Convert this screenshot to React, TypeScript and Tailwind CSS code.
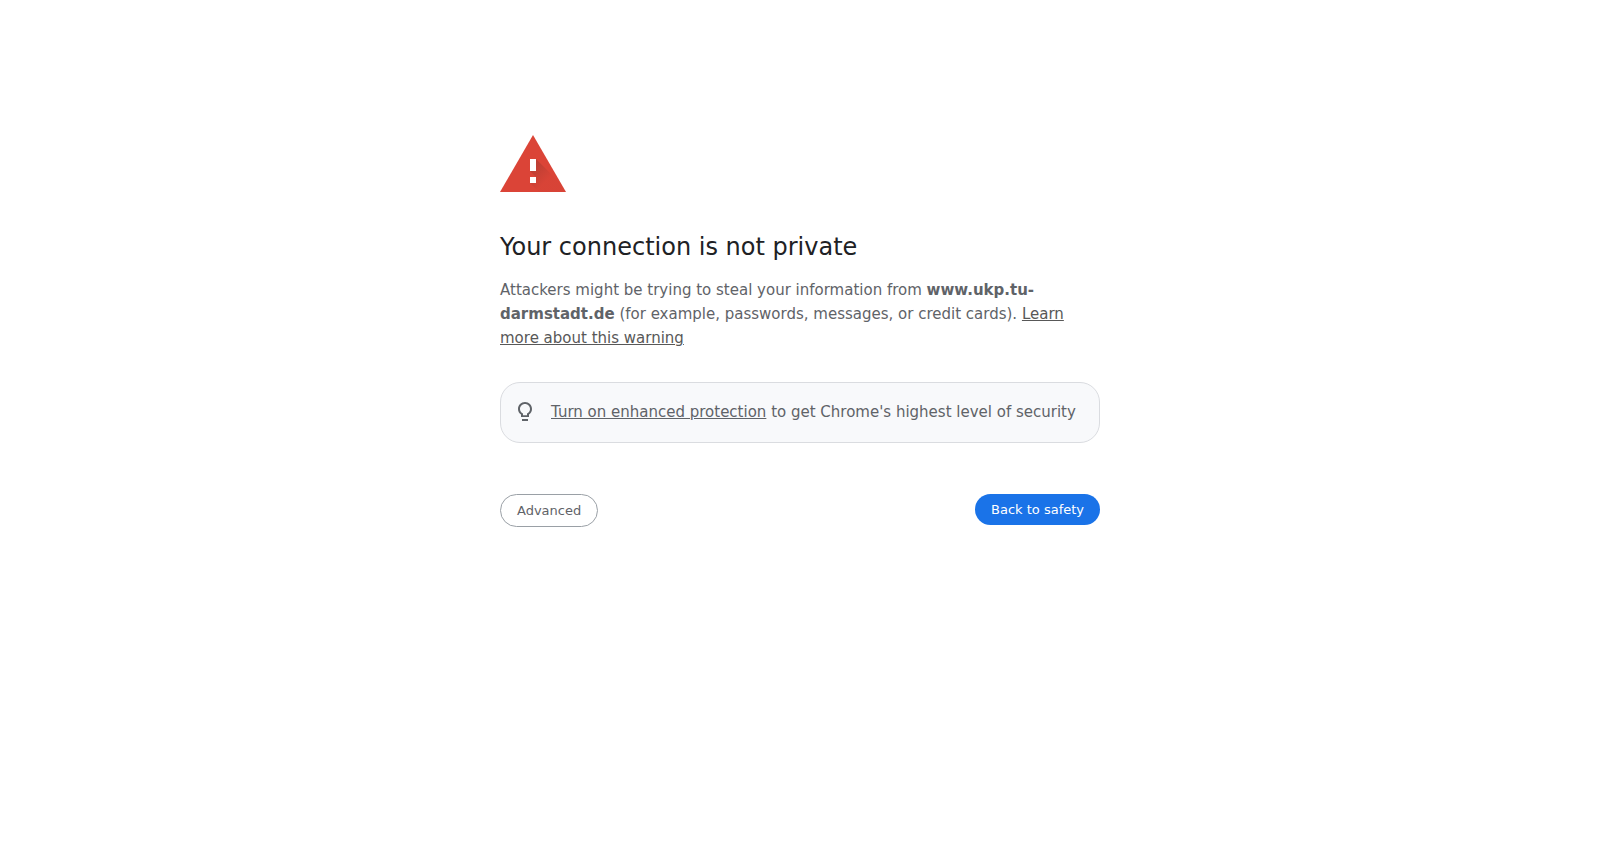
function WarningIcon() {
  return (
    <svg className="block" width="66" height="57" viewBox="0 0 66 57" aria-hidden="true">
      <defs>
        <linearGradient id="shade" x1="30" y1="34" x2="44" y2="48" gradientUnits="userSpaceOnUse">
          <stop offset="0" stopColor="#3e2723" stopOpacity="0.2" />
          <stop offset="1" stopColor="#3e2723" stopOpacity="0.02" />
        </linearGradient>
      </defs>
      <path d="M33 0 66 57H0z" fill="#db4437" />
      <path d="M36 24 62 50 66 57H39L30 48h6v-6L30 36h6z" fill="url(#shade)" />
      <path d="M30 24h6v12h-6zM30 42h6v6h-6z" fill="#fff" />
    </svg>
  );
}

function BulbIcon() {
  return (
    <svg className="size-6 shrink-0" viewBox="0 0 24 24" fill="#5f6368" aria-hidden="true">
      <path d="M9 19h6v2H9zM12 2C8.100 2 5 5 5 8.900c0 2.300 1.200 4.400 3 5.700V17h8v-2.400c1.800-1.300 3-3.400 3-5.700C19 5 15.900 2 12 2zm2.900 11-.9.600V15.200h-4v-1.600l-.9-.6C7.800 12.100 7 10.600 7 8.900 7 6.200 9.200 3.900 12 3.900s5 2.300 5 5c0 1.700-.8 3.200-2.100 4.100z" />
    </svg>
  );
}

export default function App() {
  return (
    <main className="mx-auto max-w-[600px] pt-[135px] font-['DejaVu_Sans',sans-serif] text-[15px] leading-6 text-[#5f6368]">
      <WarningIcon />
      <h1 className="mt-10 mb-4 text-2xl leading-[30px] text-[#202124]">Your connection is not private</h1>
      <p>
        Attackers might be trying to steal your information from{" "}
        <strong className="font-bold">www.ukp.tu-darmstadt.de</strong> (for example, passwords, messages, or
        credit cards).{" "}
        <a href="#learn-more" className="text-[#585858] underline">
          Learn more about this warning
        </a>
      </p>
      <div className="mt-8 flex items-center gap-3.5 rounded-[20px] border border-[#dadce0] bg-[#f8f9fb] px-3 pt-[17px] pb-[18px]">
        <BulbIcon />
        <p>
          <a href="#enhanced-protection" className="underline">
            Turn on enhanced protection
          </a>{" "}
          to get Chrome's highest level of security
        </p>
      </div>
      <div className="mt-[51px] flex items-start justify-between text-[13px] leading-[15px]">
        <button type="button" className="rounded-[20px] border border-[#9aa0a6] bg-white px-4 py-2">
          Advanced
        </button>
        <button type="button" className="rounded-[20px] bg-[#1a73e8] px-4 py-2 text-white">
          Back to safety
        </button>
      </div>
    </main>
  );
}
